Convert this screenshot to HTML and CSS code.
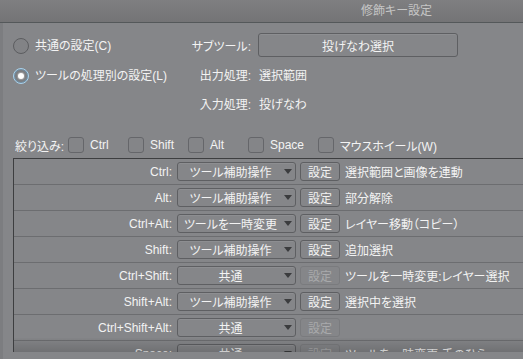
FILE: index.html
```html
<!DOCTYPE html>
<html lang="ja">
<head>
<meta charset="utf-8">
<title>修飾キー設定</title>
<link rel="stylesheet" href="styles.css">
</head>
<body>
<div class="window">
  <div class="titlebar"><span class="title">修飾キー設定</span></div>
  <div class="panel">
    <div class="top">
      <div class="modes">
        <div class="radio-row"><span class="radio"></span><span>共通の設定(C)</span></div>
        <div class="radio-row"><span class="radio on"></span><span>ツールの処理別の設定(L)</span></div>
      </div>
      <div class="info">
        <span class="info-label">サブツール:</span><span class="subtool-btn">投げなわ選択</span>
        <span class="info-label">出力処理:</span><span class="info-value">選択範囲</span>
        <span class="info-label">入力処理:</span><span class="info-value">投げなわ</span>
      </div>
    </div>

    <div class="filter">
      <span class="filter-label">絞り込み:</span>
      <span class="chk-item w60"><span class="chk"></span><span>Ctrl</span></span>
      <span class="chk-item w60"><span class="chk"></span><span>Shift</span></span>
      <span class="chk-item w60"><span class="chk"></span><span>Alt</span></span>
      <span class="chk-item w70"><span class="chk"></span><span>Space</span></span>
      <span class="chk-item"><span class="chk"></span><span>マウスホイール(W)</span></span>
    </div>

    <div class="table">
      <div class="row">
        <span class="key">Ctrl:</span>
        <span class="select">ツール補助操作</span>
        <span class="btn">設定</span>
        <span class="desc">選択範囲と画像を連動</span>
      </div>
      <div class="row">
        <span class="key">Alt:</span>
        <span class="select">ツール補助操作</span>
        <span class="btn">設定</span>
        <span class="desc">部分解除</span>
      </div>
      <div class="row">
        <span class="key">Ctrl+Alt:</span>
        <span class="select">ツールを一時変更</span>
        <span class="btn">設定</span>
        <span class="desc">レイヤー移動（コピー）</span>
      </div>
      <div class="row">
        <span class="key">Shift:</span>
        <span class="select">ツール補助操作</span>
        <span class="btn">設定</span>
        <span class="desc">追加選択</span>
      </div>
      <div class="row">
        <span class="key">Ctrl+Shift:</span>
        <span class="select">共通</span>
        <span class="btn disabled">設定</span>
        <span class="desc">ツールを一時変更:レイヤー選択</span>
      </div>
      <div class="row">
        <span class="key">Shift+Alt:</span>
        <span class="select">ツール補助操作</span>
        <span class="btn">設定</span>
        <span class="desc">選択中を選択</span>
      </div>
      <div class="row">
        <span class="key">Ctrl+Shift+Alt:</span>
        <span class="select">共通</span>
        <span class="btn disabled">設定</span>
        <span class="desc"></span>
      </div>
      <div class="row">
        <span class="key">Space:</span>
        <span class="select">共通</span>
        <span class="btn disabled">設定</span>
        <span class="desc">ツールを一時変更:手のひら</span>
      </div>
      <div class="fade"></div>
    </div>
  </div>
</div>
</body>
</html>
```

FILE: styles.css
```css
* { box-sizing: border-box; }

html, body {
  margin: 0;
  padding: 0;
  background: #858689;
}

body {
  font-family: "Liberation Sans", "Noto Sans CJK JP", sans-serif;
  font-size: 12px;
  color: #f3f3f3;
  font-feature-settings: "palt";
  overflow: hidden;
}

.window {
  width: 523px;
  height: 359px;
  overflow: hidden;
}

.titlebar {
  height: 23px;
  background: linear-gradient(#7f7f81, #747476);
  border-bottom: 1px solid #54585a;
  display: flex;
  align-items: center;
  padding-left: 361px;
}

.title {
  color: #c6c6c6;
  line-height: 14px;
}

.panel {
  height: 336px;
  border-left: 3px solid #7c7d80;
  padding-left: 10px;
}

/* top area */
.top {
  display: flex;
  height: 92px;
}

.modes {
  width: 178px;
  padding-top: 15px;
  display: flex;
  flex-direction: column;
  gap: 14px;
}

.radio-row {
  display: flex;
  align-items: center;
  gap: 6px;
  height: 16px;
  line-height: 16px;
  white-space: nowrap;
}

.radio {
  width: 16px;
  height: 16px;
  border-radius: 50%;
  border: 1px solid #5c5d60;
  background: #828386;
  flex: none;
  position: relative;
}

.radio.on {
  border: 1px solid #a9d3ee;
  box-shadow: inset 0 0 0 1px #6f8ea5;
  background: #7d7e81;
}

.radio.on::after {
  content: "";
  position: absolute;
  left: 4px;
  top: 4px;
  width: 6px;
  height: 6px;
  border-radius: 50%;
  background: #ffffff;
  box-shadow: 0 0 0 1px #9a9b9e;
}

.info {
  display: grid;
  grid-template-columns: 60px 200px;
  grid-template-rows: 24px 34px 24px;
  column-gap: 7px;
  align-items: center;
  padding-top: 10px;
}

.info-label {
  text-align: right;
  white-space: nowrap;
}

.info-value {
  padding-left: 1px;
}

.subtool-btn {
  height: 24px;
  border: 1px solid #5e5f62;
  border-radius: 3px;
  box-shadow: inset 0 1px 0 rgba(255,255,255,0.07);
  display: flex;
  align-items: center;
  justify-content: center;
}

/* filter */
.filter {
  margin-top: 22px;
  height: 16px;
  display: flex;
  align-items: center;
  padding-left: 2px;
}

.filter-label {
  width: 53px;
  flex: none;
}

.chk-item {
  display: flex;
  align-items: center;
  gap: 6px;
  flex: none;
}

.w60 { width: 60px; }
.w70 { width: 70px; }

.chk {
  width: 16px;
  height: 16px;
  border: 1px solid #65666a;
  border-radius: 3px;
  background: #848588;
  flex: none;
}

/* table */
.table {
  position: relative;
  margin-top: 5px;
  margin-right: -30px;
  height: 194px;
  border-top: 1px solid #3d3e40;
  border-left: 1px solid #3d3e40;
  overflow: hidden;
}

.row {
  height: 26px;
  border-bottom: 1px solid #6c6d70;
  display: flex;
  align-items: center;
  white-space: nowrap;
}

.key {
  width: 159px;
  text-align: right;
  padding-right: 1px;
  flex: none;
}

.select {
  position: relative;
  margin-left: 4px;
  width: 119px;
  height: 19px;
  border: 1px solid #5e5f62;
  border-radius: 3px;
  box-shadow: inset 0 1px 0 rgba(255,255,255,0.07);
  display: flex;
  align-items: center;
  justify-content: center;
  padding-right: 12px;
  flex: none;
}

.select::after {
  content: "";
  position: absolute;
  right: 3px;
  top: 6px;
  border-left: 4px solid transparent;
  border-right: 4px solid transparent;
  border-top: 5px solid #3b3c3e;
}

.btn {
  margin-left: 4px;
  width: 40px;
  height: 19px;
  border: 1px solid #5e5f62;
  border-radius: 3px;
  box-shadow: inset 0 1px 0 rgba(255,255,255,0.07);
  display: flex;
  align-items: center;
  justify-content: center;
  flex: none;
}

.btn.disabled {
  border-color: #7a7b7e;
  color: #a9aaac;
  box-shadow: none;
}

.desc {
  margin-left: 5px;
}

.fade {
  position: absolute;
  left: 0;
  right: 0;
  bottom: 0;
  height: 14px;
  background: linear-gradient(rgba(0,0,0,0.02), rgba(0,0,0,0.16));
  pointer-events: none;
}
```
